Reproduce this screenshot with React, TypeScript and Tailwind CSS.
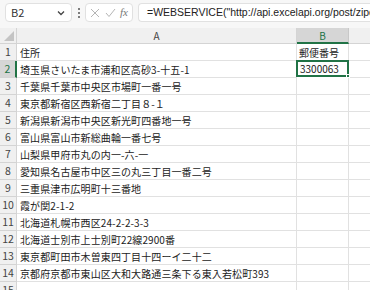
import React from 'react';

const rows: string[] = [
  '住所',
  '埼玉県さいたま市浦和区高砂3-十五-1',
  '千葉県千葉市中央区市場町一番一号',
  '東京都新宿区西新宿二丁目８-１',
  '新潟県新潟市中央区新光町四番地一号',
  '富山県富山市新総曲輪一番七号',
  '山梨県甲府市丸の内一-六-一',
  '愛知県名古屋市中区三の丸三丁目一番二号',
  '三重県津市広明町十三番地',
  '霞が関2-1-2',
  '北海道札幌市西区24-2-2-3-3',
  '北海道士別市上士別町22線2900番',
  '東京都町田市木曽東四丁目十四ーイ二十二',
  '京都府京都市東山区大和大路通三条下る東入若松町393',
  '',
];

const font = { fontFamily: '"Noto Sans CJK JP", "Liberation Sans", sans-serif' };

const App: React.FC = () => {
  return (
    <div className="w-[370px] h-[290px] overflow-hidden bg-white text-[#222]" style={font}>
      {/* formula bar */}
      <div className="h-[28px] bg-[#f7f7f7] flex items-start pt-[3px] pl-[5px] gap-[5px]">
        <div className="w-[67px] h-[19px] bg-white border border-[#e1e1e1] rounded-[4px] flex items-center justify-between px-[5px]">
          <span className="text-[11px] text-[#333]">B2</span>
          <svg width="8" height="6" viewBox="0 0 8 6" className="mr-[1px]">
            <path d="M1 1.5 L4 4.5 L7 1.5" fill="none" stroke="#444" strokeWidth="1.3" />
          </svg>
        </div>
        <div className="w-[3px] h-[19px] flex flex-col items-center justify-center gap-[2px]">
          <span className="w-[2px] h-[2px] bg-[#555] rounded-full" />
          <span className="w-[2px] h-[2px] bg-[#555] rounded-full" />
          <span className="w-[2px] h-[2px] bg-[#555] rounded-full" />
        </div>
        <div className="w-[48px] h-[19px] bg-white border border-[#e1e1e1] rounded-[4px] flex items-center justify-between px-[4px]">
          <svg width="10" height="10" viewBox="0 0 10 10">
            <path d="M1 1 L9 9 M9 1 L1 9" stroke="#b5b5b5" strokeWidth="1" fill="none" />
          </svg>
          <svg width="11" height="10" viewBox="0 0 11 10">
            <path d="M1 5 L4 8.5 L10 1" stroke="#b5b5b5" strokeWidth="1" fill="none" />
          </svg>
          <span className="text-[11px] italic text-[#777]" style={{ fontFamily: '"Liberation Serif", serif' }}>
            fx
          </span>
        </div>
        <div className="flex-1 h-[19px] bg-white border border-[#e1e1e1] border-r-0 rounded-l-[4px] flex items-center pl-[8px] overflow-hidden whitespace-nowrap">
          <span className="text-[10.5px] text-[#222]" style={{ fontFamily: '"Liberation Sans", sans-serif' }}>
            =WEBSERVICE("http://api.excelapi.org/post/zipcode?address="&amp;A2)
          </span>
        </div>
      </div>

      {/* grid */}
      <div className="grid grid-cols-[17px_280px_52px_1fr] text-[10px]">
        {/* header */}
        <div className="h-[16px] bg-[#f0f0f0] border-r border-b border-[#d4d4d4] relative">
          <svg width="10" height="10" viewBox="0 0 10 10" className="absolute right-[2px] bottom-[2px]">
            <path d="M10 0 L10 10 L0 10 Z" fill="#c4c4c4" />
          </svg>
        </div>
        <div className="h-[16px] bg-[#f0f0f0] border-r border-b border-[#d4d4d4] flex items-center justify-center text-[#444] text-[10px]">
          A
        </div>
        <div className="h-[16px] bg-[#d6d6d6] border-r border-[#c8c8c8] border-b-2 border-b-[#217346] flex items-center justify-center text-[#217346] text-[10px]">
          B
        </div>
        <div className="h-[16px] bg-[#f0f0f0] border-b border-[#d4d4d4]" />

        {rows.map((t, i) => {
          const n = i + 1;
          const sel = n === 2;
          return (
            <React.Fragment key={n}>
              <div
                className={
                  sel
                    ? 'h-[17px] bg-[#d6d6d6] border-r-2 border-r-[#217346] border-b border-b-[#d4d4d4] flex items-center justify-center text-[#217346] text-[10.5px]'
                    : 'h-[17px] bg-[#f0f0f0] border-r border-b border-[#d4d4d4] flex items-center justify-center text-[#444] text-[10.5px]'
                }
              >
                {n}
              </div>
              <div className="h-[17px] border-r border-b border-[#e1e1e1] flex items-center pl-[3px] whitespace-nowrap overflow-visible tracking-[0.1px]">
                {t}
              </div>
              {sel ? (
                <div className="h-[17px] border-2 border-[#217346] -mt-[1px] -ml-[1px] flex items-center pl-[2px] relative bg-white">
                  3300063
                  <span className="absolute -right-[3px] -bottom-[3px] w-[4px] h-[4px] bg-[#217346] border border-white" />
                </div>
              ) : (
                <div className="h-[17px] border-r border-b border-[#e1e1e1] flex items-center pl-[2px] whitespace-nowrap">
                  {n === 1 ? '郵便番号' : ''}
                </div>
              )}
              <div className="h-[17px] border-b border-[#e1e1e1]" />
            </React.Fragment>
          );
        })}
      </div>
    </div>
  );
};

export default App;
